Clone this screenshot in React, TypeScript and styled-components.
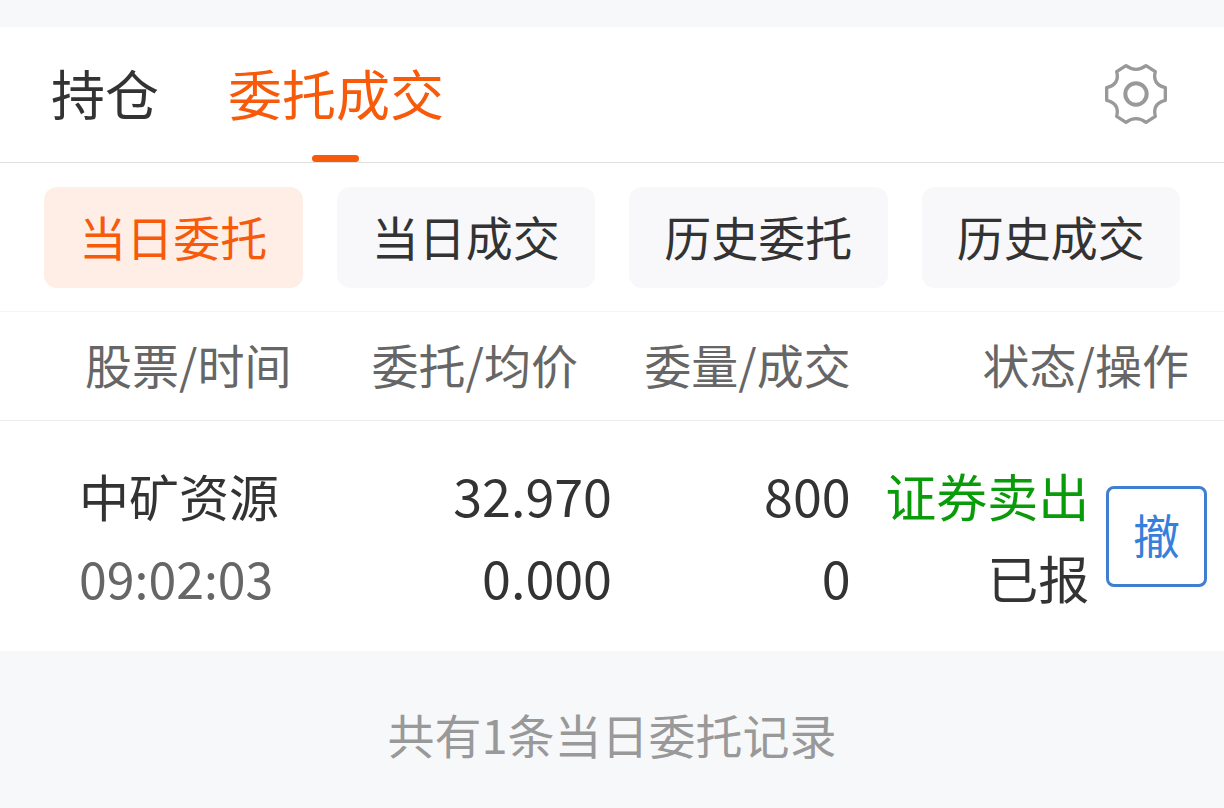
import React, { useState } from "react";
import styled, { createGlobalStyle } from "styled-components";

const GlobalStyle = createGlobalStyle`
  * { box-sizing: border-box; }
  body {
    margin: 0;
    background: #f7f8fa;
    color: #333;
    font-family: "Noto Sans CJK SC", "Noto Sans", sans-serif;
  }
  button { font: inherit; color: inherit; cursor: pointer; }
`;

const Page = styled.main`
  padding-top: 27px;
`;

const Panel = styled.section`
  background: #fff;
`;

const TabBar = styled.nav`
  display: flex;
  align-items: stretch;
  gap: 69px;
  height: 136px;
  padding: 0 55px 0 51px;
  border-bottom: 1px solid #e0e0e0;
`;

const Tab = styled.button<{ $active?: boolean }>`
  position: relative;
  padding: 0 0 4px;
  border: 0;
  background: none;
  font-size: 54px;
  line-height: 80px;
  color: ${(p) => (p.$active ? "#f65a0a" : "#333")};

  &::after {
    content: "";
    display: ${(p) => (p.$active ? "block" : "none")};
    position: absolute;
    left: calc(50% - 24px);
    bottom: 0;
    width: 47px;
    height: 7px;
    border-radius: 4px;
    background: #f65a0a;
  }
`;

const SettingsButton = styled.button`
  display: flex;
  align-items: center;
  margin-left: auto;
  padding: 0 0 2px;
  border: 0;
  background: none;
`;

const Chips = styled.div`
  display: grid;
  grid-template-columns: repeat(4, 1fr);
  gap: 34px;
  padding: 24px 44px 23px;
  border-bottom: 1px solid #f5f5f6;
`;

const Chip = styled.button<{ $active?: boolean }>`
  height: 101px;
  padding: 0 0 4px;
  border: 0;
  border-radius: 13px;
  font-size: 47px;
  line-height: 70px;
  background: ${(p) => (p.$active ? "#ffeee6" : "#f8f8fa")};
  color: ${(p) => (p.$active ? "#f65a0a" : "#333")};
`;

const Orders = styled.table`
  width: 100%;
  table-layout: fixed;
  border-collapse: separate;
  border-spacing: 0;
`;

const Col = styled.col<{ $share: number }>`
  width: ${(p) => p.$share}%;
`;

const HeadCell = styled.th<{ $left?: number; $right?: number }>`
  height: 109px;
  padding: 0 ${(p) => p.$right ?? 0}px 4px ${(p) => p.$left ?? 0}px;
  border-bottom: 1px solid #ebebeb;
  font-size: 47px;
  font-weight: 400;
  line-height: 70px;
  text-align: ${(p) => (p.$left ? "left" : "right")};
  white-space: nowrap;
  color: #666;
`;

const Cell = styled.td<{ $first?: boolean; $size?: number }>`
  height: 230px;
  padding: 0 0 0 ${(p) => (p.$first ? 79 : 0)}px;
  font-size: ${(p) => p.$size ?? 52}px;
  line-height: 82px;
  text-align: ${(p) => (p.$first ? "left" : "right")};
  white-space: nowrap;
  vertical-align: middle;
`;

const Line = styled.div<{ $tone?: string }>`
  color: ${(p) => p.$tone ?? "#333"};
`;

const ActionCell = styled.td`
  padding: 0 17px 0 0;
  text-align: right;
  vertical-align: middle;
`;

const CancelButton = styled.button`
  display: inline-flex;
  align-items: center;
  justify-content: center;
  width: 101px;
  height: 101px;
  padding: 0 0 4px;
  border: 3px solid #3f7fcf;
  border-radius: 8px;
  background: #fff;
  font-size: 47px;
  line-height: 70px;
  color: #3680dc;
  vertical-align: middle;
`;

const Summary = styled.p`
  margin: 0;
  padding: 48px 0;
  font-size: 47px;
  line-height: 70px;
  text-align: center;
  color: #999;
`;

const tabs = ["持仓", "委托成交"];
const filters = ["当日委托", "当日成交", "历史委托", "历史成交"];
const orders = [
  {
    name: "中矿资源",
    time: "09:02:03",
    price: "32.970",
    average: "0.000",
    amount: "800",
    filled: "0",
    side: "证券卖出",
    status: "已报",
  },
];

function GearIcon() {
  return (
    <svg width="66" height="66" viewBox="69 50 198 198" fill="none" stroke="#999" strokeWidth="10" strokeLinejoin="round" aria-hidden="true">
      <path d="M138 64Q168 86 198 64L226 82Q216 120 256 130V168Q216 178 226 216L198 234Q168 212 138 234L110 216Q120 178 80 168V130Q120 120 110 82Z" />
      <circle cx="168" cy="149" r="32" strokeWidth="12" />
    </svg>
  );
}

export default function App() {
  const [tab, setTab] = useState(tabs[1]);
  const [filter, setFilter] = useState(filters[0]);

  return (
    <Page>
      <GlobalStyle />
      <Panel>
        <TabBar>
          {tabs.map((t) => (
            <Tab key={t} $active={t === tab} onClick={() => setTab(t)}>
              {t}
            </Tab>
          ))}
          <SettingsButton aria-label="设置">
            <GearIcon />
          </SettingsButton>
        </TabBar>
        <Chips>
          {filters.map((f) => (
            <Chip key={f} $active={f === filter} onClick={() => setFilter(f)}>
              {f}
            </Chip>
          ))}
        </Chips>
        <Orders>
          <colgroup>
            <Col $share={27} />
            <Col $share={23} />
            <Col $share={19.5} />
            <Col $share={19.5} />
            <Col $share={11} />
          </colgroup>
          <thead>
            <tr>
              <HeadCell $left={85}>股票/时间</HeadCell>
              <HeadCell $right={34}>委托/均价</HeadCell>
              <HeadCell>委量/成交</HeadCell>
              <HeadCell colSpan={2} $right={35}>状态/操作</HeadCell>
            </tr>
          </thead>
          <tbody>
            {orders.map((o) => (
              <tr key={o.time}>
                <Cell $first $size={50}>
                  <Line>{o.name}</Line>
                  <Line $tone="#666">{o.time}</Line>
                </Cell>
                <Cell>
                  <Line>{o.price}</Line>
                  <Line>{o.average}</Line>
                </Cell>
                <Cell>
                  <Line>{o.amount}</Line>
                  <Line>{o.filled}</Line>
                </Cell>
                <Cell $size={51}>
                  <Line $tone="#0a9b0a">{o.side}</Line>
                  <Line>{o.status}</Line>
                </Cell>
                <ActionCell>
                  <CancelButton>撤</CancelButton>
                </ActionCell>
              </tr>
            ))}
          </tbody>
        </Orders>
      </Panel>
      <Summary>共有{orders.length}条当日委托记录</Summary>
    </Page>
  );
}
